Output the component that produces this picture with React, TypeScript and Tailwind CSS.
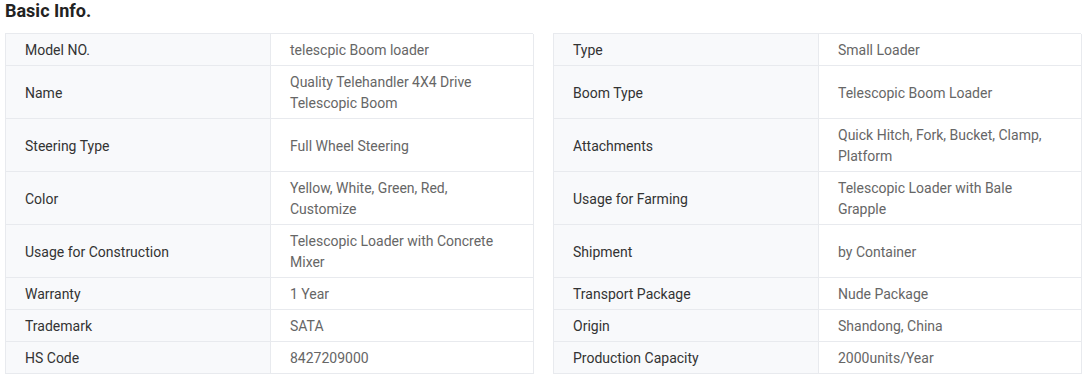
import React from "react";

type Row = [string, string];

const LEFT: Row[] = [
  ["Model NO.", "telescpic Boom loader"],
  ["Name", "Quality Telehandler 4X4 Drive Telescopic Boom"],
  ["Steering Type", "Full Wheel Steering"],
  ["Color", "Yellow, White, Green, Red, Customize"],
  ["Usage for Construction", "Telescopic Loader with Concrete Mixer"],
  ["Warranty", "1 Year"],
  ["Trademark", "SATA"],
  ["HS Code", "8427209000"],
];

const RIGHT: Row[] = [
  ["Type", "Small Loader"],
  ["Boom Type", "Telescopic Boom Loader"],
  ["Attachments", "Quick Hitch, Fork, Bucket, Clamp, Platform"],
  ["Usage for Farming", "Telescopic Loader with Bale Grapple"],
  ["Shipment", "by Container"],
  ["Transport Package", "Nude Package"],
  ["Origin", "Shandong, China"],
  ["Production Capacity", "2000units/Year"],
];

// rows 2-5 are two lines tall in both tables
const TALL = [false, true, true, true, true, false, false, false];

const InfoTable = ({ rows }: { rows: Row[] }) => (
  <div className="w-[528px] border-t border-l border-[#e8eaee] grid grid-cols-[265px_263px] text-[14px] leading-[21px]">
    {rows.map(([label, value], i) => (
      <React.Fragment key={label}>
        <div
          className={`bg-[#f8f9fb] text-[#333] border-r border-b border-[#e8eaee] pl-[19px] pr-3 pt-[2px] flex items-center ${
            TALL[i] ? "h-[53px]" : "h-[32px]"
          }`}
        >
          {label}
        </div>
        <div
          className={`bg-white text-[#666] border-r border-b border-[#e8eaee] pl-[19px] pr-[20px] pt-[2px] flex items-center ${
            TALL[i] ? "h-[53px]" : "h-[32px]"
          }`}
        >
          {value}
        </div>
      </React.Fragment>
    ))}
  </div>
);

export default function App() {
  return (
    <div
      className="w-[1086px] h-[377px] bg-white px-[5px]"
      style={{ fontFamily: "Roboto, 'Liberation Sans', sans-serif" }}
    >
      <h2 className="text-[18px] leading-[22px] font-bold text-[#222]">
        Basic Info.
      </h2>
      <div className="mt-[11px] flex gap-[20px]">
        <InfoTable rows={LEFT} />
        <InfoTable rows={RIGHT} />
      </div>
    </div>
  );
}
